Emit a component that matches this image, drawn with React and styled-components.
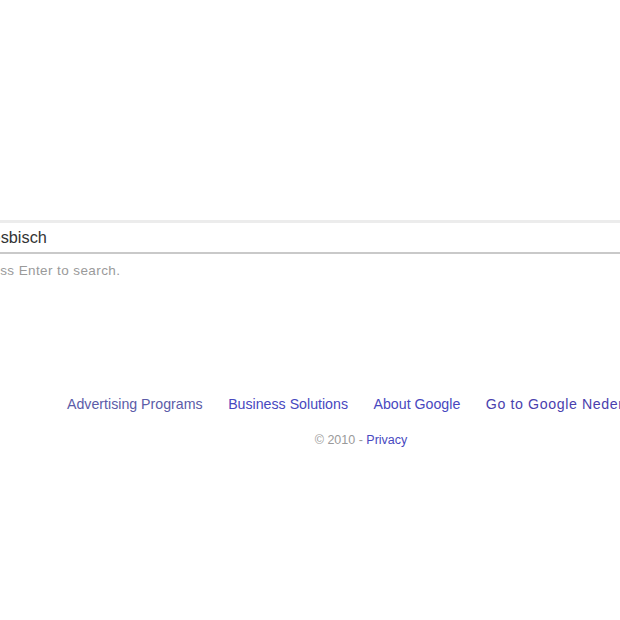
import React from "react";
import styled, { createGlobalStyle } from "styled-components";

const GlobalStyle = createGlobalStyle`
  html, body {
    margin: 0;
    padding: 0;
    background: #ffffff;
  }
  body {
    font-family: "Liberation Sans", Arial, sans-serif;
  }
`;

const Screen = styled.div`
  width: 620px;
  height: 620px;
  overflow: hidden;
  background: #ffffff;
`;

const Page = styled.div`
  width: 722px;
  display: flex;
  flex-direction: column;
  padding-top: 220px;
`;

const SearchBox = styled.div`
  margin-left: -20px;
  width: 720px;
  height: 29px;
  display: flex;
  align-items: center;
  padding-left: 8px;
  border-top: 3px solid #ececec;
  border-bottom: 2px solid #c9c9c9;
  font-size: 16.3px;
  color: #333333;
`;

const Hint = styled.div`
  margin-top: 9px;
  margin-left: -22px;
  font-size: 13.5px;
  letter-spacing: 0.4px;
  line-height: 16px;
  color: #9a9a9a;
`;

const Footer = styled.div`
  margin-top: 116px;
  display: flex;
  flex-direction: column;
`;

const Links = styled.nav`
  display: flex;
  gap: 25.5px;
  padding-left: 67px;
  white-space: nowrap;
`;

const FooterLink = styled.a`
  font-size: 14.2px;
  line-height: 18px;
  letter-spacing: ${({ $wide }) => ($wide ? "0.6px" : "0")};
  color: ${({ $tone }) => $tone || "#4848c0"};
  text-decoration: none;
`;

const Copyright = styled.div`
  margin-top: 19px;
  text-align: center;
  font-size: 12.5px;
  line-height: 16px;
  color: #9a9a9a;
`;

const PrivacyLink = styled.a`
  color: #4848c0;
  text-decoration: none;
`;

const links = [
  { name: "Advertising Programs", tone: "#5c5ca8" },
  { name: "Business Solutions" },
  { name: "About Google" },
  { name: "Go to Google Nederland", tone: "#4a3fae", wide: true },
];

export default function App() {
  return (
    <>
      <GlobalStyle />
      <Screen>
        <Page>
          <SearchBox>lesbisch</SearchBox>
          <Hint>Press Enter to search.</Hint>
          <Footer>
            <Links>
              {links.map((link) => (
                <FooterLink key={link.name} $tone={link.tone} $wide={link.wide}>
                  {link.name}
                </FooterLink>
              ))}
            </Links>
            <Copyright>
              © 2010 - <PrivacyLink>Privacy</PrivacyLink>
            </Copyright>
          </Footer>
        </Page>
      </Screen>
    </>
  );
}
